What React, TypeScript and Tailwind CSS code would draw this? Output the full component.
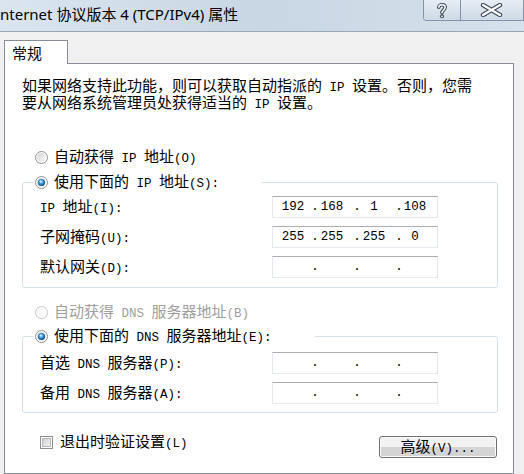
import React from 'react';

// SimSun keeps latin half-width: draw ascii runs in a mono face at 12.5px (7.5px per char)
const T: React.FC<{ s: string }> = ({ s }) => (
  <span>
    {s.split(/([\x20-\x7e]+)/).map((p, i) =>
      i % 2 === 1 ? (
        <span key={i} className="font-['Liberation_Mono',monospace] text-[12.5px]">
          {p}
        </span>
      ) : (
        p
      )
    )}
  </span>
);

const Radio: React.FC<{ checked?: boolean; disabled?: boolean }> = ({ checked, disabled }) => {
  const id = checked ? 'rc' : disabled ? 'rd' : 'ru';
  return (
    <svg width="13" height="13" viewBox="0 0 13 13" className="shrink-0">
      <defs>
        <linearGradient id={`${id}-o`} x1="0" y1="0" x2="1" y2="1">
          <stop offset="0" stopColor={disabled ? '#f4f4f4' : '#d3d3d3'} />
          <stop offset="1" stopColor={disabled ? '#fdfdfd' : '#fbfbfb'} />
        </linearGradient>
        <radialGradient id={`${id}-d`} cx="0.45" cy="0.4" r="0.6">
          <stop offset="0" stopColor="#b6e6ff" />
          <stop offset="0.45" stopColor="#3b9be0" />
          <stop offset="1" stopColor="#0f3f73" />
        </radialGradient>
      </defs>
      <circle cx="6.5" cy="6.5" r="6" fill="#fff" stroke={disabled ? '#c5c5c5' : '#8e8f8f'} />
      <circle cx="6.5" cy="6.5" r="4.5" fill={`url(#${id}-o)`} />
      {checked && <circle cx="6.5" cy="6.5" r="3.6" fill={`url(#${id}-d)`} />}
      {checked && <circle cx="5.6" cy="5.4" r="1" fill="#e8f7ff" opacity="0.8" />}
    </svg>
  );
};

const Checkbox: React.FC = () => (
  <svg width="13" height="13" viewBox="0 0 13 13" className="shrink-0">
    <defs>
      <linearGradient id="cb" x1="0" y1="0" x2="1" y2="1">
        <stop offset="0" stopColor="#cbcbcb" />
        <stop offset="1" stopColor="#f6f6f6" />
      </linearGradient>
    </defs>
    <rect x="0.5" y="0.5" width="12" height="12" fill="#fff" stroke="#8e8f8f" />
    <rect x="2.5" y="2.5" width="8" height="8" fill="url(#cb)" stroke="#b4b8bd" />
  </svg>
);

const IpBox: React.FC<{ parts?: string[] }> = ({ parts = ['', '', '', ''] }) => (
  <div className="flex h-[22px] w-[166px] items-center border border-[#e3e9ef] border-t-[#abadb3] bg-white font-['Liberation_Mono',monospace] text-[12.5px] leading-[20px]">
    <div className="w-[40px] text-center">{parts[0]}</div>
    <div className="flex w-[4px] justify-center">.</div>
    <div className="w-[38px] pr-[8px] text-center">{parts[1]}</div>
    <div className="flex w-[4px] justify-center">.</div>
    <div className="w-[38px] pr-[8px] text-center">{parts[2]}</div>
    <div className="flex w-[4px] justify-center">.</div>
    <div className="w-[36px] pr-[8px] text-center">{parts[3]}</div>
  </div>
);

const Row: React.FC<{ label: string; parts?: string[] }> = ({ label, parts }) => (
  <div className="flex h-[22px] items-center">
    <div className="w-[239px] pl-[7px] leading-[15px]">
      <T s={label} />
    </div>
    <IpBox parts={parts} />
  </div>
);

export default function App() {
  return (
    <div className="flex h-[474px] w-[524px] flex-col overflow-hidden whitespace-pre bg-[#f0f0f0] font-['Noto_Sans_CJK_SC',sans-serif] text-[15px] text-black">
      {/* Title bar */}
      <div className="flex h-[32px] shrink-0 items-start justify-between border-b border-[#98a6b6] bg-gradient-to-r from-[#dae5f0] via-[#c9d6e3] to-[#d5e1ec]">
        <div className="pt-[4px] font-['Noto_Sans','Noto_Sans_CJK_SC',sans-serif] text-[15px] leading-[20px] text-black">
          nternet 协议版本 4 (TCP/IPv4) 属性
        </div>
        <div className="flex h-[21px] overflow-hidden rounded-bl-[4px] border border-t-0 border-[#8494a8] shadow-[inset_0_0_0_1px_rgba(255,255,255,0.6)]">
          <div className="flex w-[37px] items-center justify-center border-r border-[#8494a8] bg-gradient-to-b from-[#e6edf4] to-[#cfdae6]">
            <svg width="12" height="17" viewBox="0 0 11 16">
              <path d="M2.5 5 C2.5 1.8 8.5 1.8 8.5 5 C8.5 7.4 5.5 7.6 5.5 10.2" fill="none" stroke="#3e4b5c" strokeWidth="3.4" strokeLinecap="round" />
              <circle cx="5.5" cy="13.5" r="1.9" fill="#3e4b5c" />
              <path d="M2.5 5 C2.5 1.8 8.5 1.8 8.5 5 C8.5 7.4 5.5 7.6 5.5 10.2" fill="none" stroke="#fff" strokeWidth="1.4" strokeLinecap="round" />
              <circle cx="5.5" cy="13.5" r="0.9" fill="#fff" />
            </svg>
          </div>
          <div className="flex w-[62px] items-center justify-start bg-gradient-to-b from-[#e6edf4] to-[#cfdae6] pl-[19px]">
            <svg width="23" height="14" viewBox="0 0 23 14">
              <path d="M3 2 L20 12 M20 2 L3 12" stroke="#3e4b5c" strokeWidth="4.4" strokeLinecap="round" />
              <path d="M3 2 L20 12 M20 2 L3 12" stroke="#fff" strokeWidth="2.2" strokeLinecap="round" />
            </svg>
          </div>
        </div>
      </div>

      {/* Body */}
      <div className="flex flex-1 flex-col px-[4px] pt-[8px]">
        <div className="relative z-10 -mb-px flex h-[24px] w-[64px] items-center border border-b-0 border-[#898c95] bg-white pl-[7px] leading-[15px]">
          常规
        </div>
        <div className="flex w-[510px] flex-1 flex-col border border-[#898c95] bg-white pl-[17px] pt-[14px]">
          <p className="h-[26px] text-[15px] leading-[13px]">
            <T s="如果网络支持此功能，则可以获取自动指派的 IP 设置。否则，您需" />
            <br />
            <T s="要从网络系统管理员处获得适当的 IP 设置。" />
          </p>

          <div className="mt-[43px] flex h-[20px] items-center gap-[6px] pl-[13px] leading-[15px]">
            <Radio />
            <T s="自动获得 IP 地址(O)" />
          </div>

          <fieldset className="mt-[5px] w-[476px] rounded-[3px] border border-[#d5dfe5] pb-[9px] pl-[10px]">
            <legend className="w-[229px]">
              <div className="flex h-[20px] items-center gap-[6px] pl-[2px] leading-[15px]">
                <Radio checked />
                <T s="使用下面的 IP 地址(S):" />
              </div>
            </legend>
            <div className="flex flex-col gap-[8px] pt-[4px]">
              <Row label="IP 地址(I):" parts={['192', '168', '1', '108']} />
              <Row label="子网掩码(U):" parts={['255', '255', '255', '0']} />
              <Row label="默认网关(D):" />
            </div>
          </fieldset>

          <div className="mt-[14px] flex h-[20px] items-center gap-[6px] pl-[13px] leading-[15px] text-[#a0a0a0]">
            <Radio disabled />
            <T s="自动获得 DNS 服务器地址(B)" />
          </div>

          <fieldset className="mt-[4px] w-[476px] rounded-[3px] border border-[#d5dfe5] pb-[8px] pl-[10px]">
            <legend className="w-[282px]">
              <div className="flex h-[20px] items-center gap-[6px] pl-[2px] leading-[15px]">
                <Radio checked />
                <T s="使用下面的 DNS 服务器地址(E):" />
              </div>
            </legend>
            <div className="flex flex-col gap-[8px] pt-[6px]">
              <Row label="首选 DNS 服务器(P):" />
              <Row label="备用 DNS 服务器(A):" />
            </div>
          </fieldset>

          <div className="mt-[20px] flex w-[476px] items-start justify-between pl-[18px] pr-[1px]">
            <div className="flex h-[18px] items-center gap-[7px] leading-[15px]">
              <Checkbox />
              <T s="退出时验证设置(L)" />
            </div>
            <button className="mt-[3px] flex h-[22px] w-[118px] items-center justify-center rounded-[3px] border border-[#707070] bg-gradient-to-b from-[#f2f2f2] from-50% to-[#d4d4d4] to-50% leading-[15px] shadow-[inset_0_0_0_1px_#fcfcfc]">
              <T s="高级(V)..." />
            </button>
          </div>
        </div>
      </div>
    </div>
  );
}
